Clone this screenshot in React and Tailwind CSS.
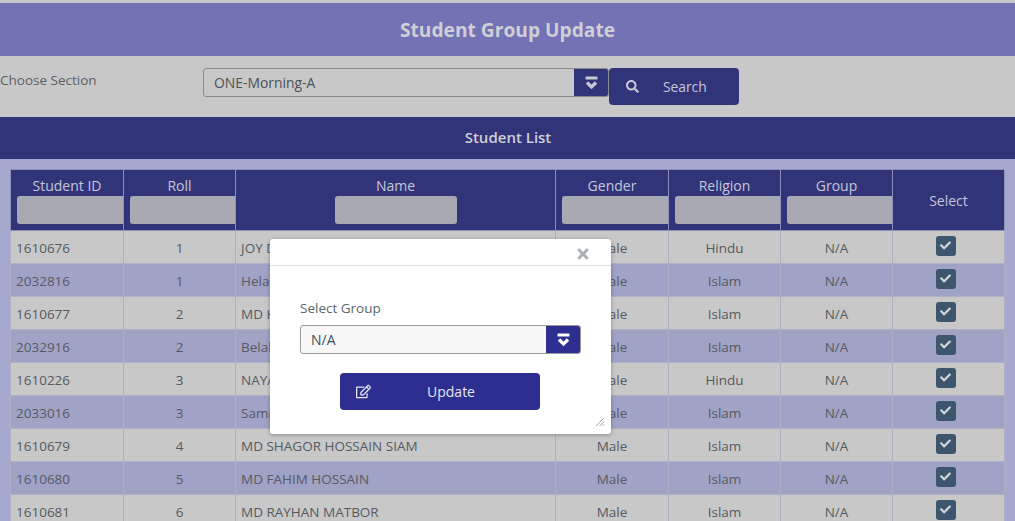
import { FaCheck, FaRegEdit, FaSearch, FaTimes } from 'react-icons/fa';

const students = [
  ['1610676', '1', 'JOY DAS', 'Male', 'Hindu'],
  ['2032816', '1', 'Helal Uddin', 'Male', 'Islam'],
  ['1610677', '2', 'MD HASAN', 'Male', 'Islam'],
  ['2032916', '2', 'Belal Hossain', 'Male', 'Islam'],
  ['1610226', '3', 'NAYAN DAS', 'Male', 'Hindu'],
  ['2033016', '3', 'Samir Hossain', 'Male', 'Islam'],
  ['1610679', '4', 'MD SHAGOR HOSSAIN SIAM', 'Male', 'Islam'],
  ['1610680', '5', 'MD FAHIM HOSSAIN', 'Male', 'Islam'],
  ['1610681', '6', 'MD RAYHAN MATBOR', 'Male', 'Islam'],
];

const columns = [
  { label: 'Student ID', width: 'w-[113px]' },
  { label: 'Roll', width: 'w-[112px]' },
  { label: 'Name', width: 'w-[320px]', center: true },
  { label: 'Gender', width: 'w-[113px]' },
  { label: 'Religion', width: 'w-[112px]' },
  { label: 'Group', width: 'w-[112px]' },
];

export default function App() {
  return (
    <div className="relative h-[521px] overflow-hidden bg-[#a6a8cd] pt-[3px] font-['Open_Sans',sans-serif] text-[13.5px] text-[#555b62]">
      <div className="absolute inset-x-0 top-0 h-[3px] bg-[#c8c8c8]" />
      <div className="flex h-[53px] items-center justify-center bg-[#7272b5] pt-[1px] text-[19.2px] font-bold text-[#cfcfd6]">
        Student Group Update
      </div>
      <SearchRow />
      <div className="flex h-[42px] items-center justify-center bg-[#32347a] pb-[1px] pl-[1px] text-[15px] font-semibold text-[#cfcfd6]">
        Student List
      </div>
      <div className="px-[10px] pt-[10px]">
        <StudentTable />
      </div>
      <GroupModal />
    </div>
  );
}

function SearchRow() {
  return (
    <div className="flex h-[61px] items-start bg-[#c8c8c8]">
      <div className="mt-[14px] w-[203px] leading-5 text-[#5a6066]">Choose Section</div>
      <div className="mt-[12px] flex h-[29px] w-[406px] overflow-hidden rounded-[3px] border border-[#8a8a8a]">
        <div className="flex-1 pl-[10px] text-[13.9px] leading-[27px] text-[#4c5258]">ONE-Morning-A</div>
        <div className="flex w-[34px] items-center justify-center bg-[#32347a]">
          <DropIcon className="h-[14px] w-[13px] text-[#c8c8d0]" />
        </div>
      </div>
      <button className="relative mt-[12px] flex h-[37px] w-[130px] items-center rounded-[4px] bg-[#32347a] pl-[17px] text-[#c6c6d6]">
        <FaSearch className="h-[13px] w-[13px]" />
        <span className="absolute left-[54px] top-[9px] text-[13.8px] leading-5">Search</span>
      </button>
    </div>
  );
}

function StudentTable() {
  return (
    <table className="w-[995px] table-fixed border-collapse">
      <thead>
        <tr className="h-[61px] bg-[#32347a] text-[14px] text-[#c6c6d6]">
          {columns.map((col) => (
            <th key={col.label} className={`${col.width} overflow-hidden border border-[#8f90b8] p-0 align-top font-normal`}>
              <div className="mt-[6px] h-5 leading-5">{col.label}</div>
              <div className={col.center ? 'flex justify-center' : 'pl-[6px]'}>
                <div className="h-[28px] w-[122px] rounded-[3px] bg-[#a9a9b3]" />
              </div>
            </th>
          ))}
          <th className="border border-[#8f90b8] p-0 font-normal">Select</th>
        </tr>
      </thead>
      <tbody>
        {students.map((row, i) => (
          <tr key={row[0]} className={`h-[33px] ${i % 2 === 0 ? 'bg-[#c8c8c8]' : 'bg-[#a0a2c6]'}`}>
            <td className="border border-[#b0b0c4] pl-[5px] pt-[2px]">{row[0]}</td>
            <td className="border border-[#b0b0c4] pt-[2px] text-center">{row[1]}</td>
            <td className="whitespace-nowrap border border-[#b0b0c4] pl-[5px] pt-[2px]">{row[2]}</td>
            <td className="border border-[#b0b0c4] pt-[2px] text-center">{row[3]}</td>
            <td className="border border-[#b0b0c4] pt-[2px] text-center">{row[4]}</td>
            <td className="border border-[#b0b0c4] pt-[2px] text-center">N/A</td>
            <td className="border border-[#b0b0c4] pb-[3px] pr-[6px]">
              <div className="mx-auto flex h-5 w-5 items-center justify-center rounded-[3px] bg-[#3d566e]">
                <FaCheck className="h-[11px] w-[11px] text-[#d4d6da]" />
              </div>
            </td>
          </tr>
        ))}
      </tbody>
    </table>
  );
}

function GroupModal() {
  return (
    <div className="absolute left-[270px] top-[239px] h-[195px] w-[341px] rounded-[3px] bg-white shadow-[0_1px_4px_rgba(0,0,0,0.3)]">
      <div className="flex h-[27px] items-center justify-end border-b border-[#e0e0e0] pr-[20px] pt-[3px]">
        <FaTimes className="h-[16px] w-[16px] text-[#a9aeb3]" />
      </div>
      <div className="px-[30px] pt-[32px]">
        <div className="leading-5 text-[#5a6670]">Select Group</div>
        <div className="mt-[7px] flex h-[29px] w-[281px] overflow-hidden rounded-[3px] border border-[#9a9a9a] bg-[#f7f7f7]">
          <div className="flex-1 pl-[10px] text-[14px] leading-[27px] text-[#3f4f5f]">N/A</div>
          <div className="flex w-[34px] items-center justify-center bg-[#2d2e8f]">
            <DropIcon className="h-[14px] w-[13px] text-white" />
          </div>
        </div>
        <button className="relative ml-[40px] mt-[19px] block h-[37px] w-[200px] rounded-[4px] bg-[#2d2e8f] text-center text-[14px] text-[#e6e6f2]">
          <FaRegEdit className="absolute left-[16px] top-[11px] h-[15px] w-[15px]" />
          <span className="relative left-[11px]">Update</span>
        </button>
      </div>
      <svg className="absolute bottom-[7px] right-[6px] h-[10px] w-[10px] text-[#9a9a9a]" viewBox="0 0 11 11" stroke="currentColor" fill="none">
        <path d="M1 10 10 1M5 10 10 5M8 10 10 8" />
      </svg>
    </div>
  );
}

function DropIcon({ className }) {
  return (
    <svg className={className} viewBox="0 0 13 14" fill="none">
      <rect x="0.5" y="0.5" width="12" height="3" rx="0.5" fill="currentColor" />
      <path d="M2 6.5 6.5 11 11 6.5" stroke="currentColor" strokeWidth="3.2" />
    </svg>
  );
}
